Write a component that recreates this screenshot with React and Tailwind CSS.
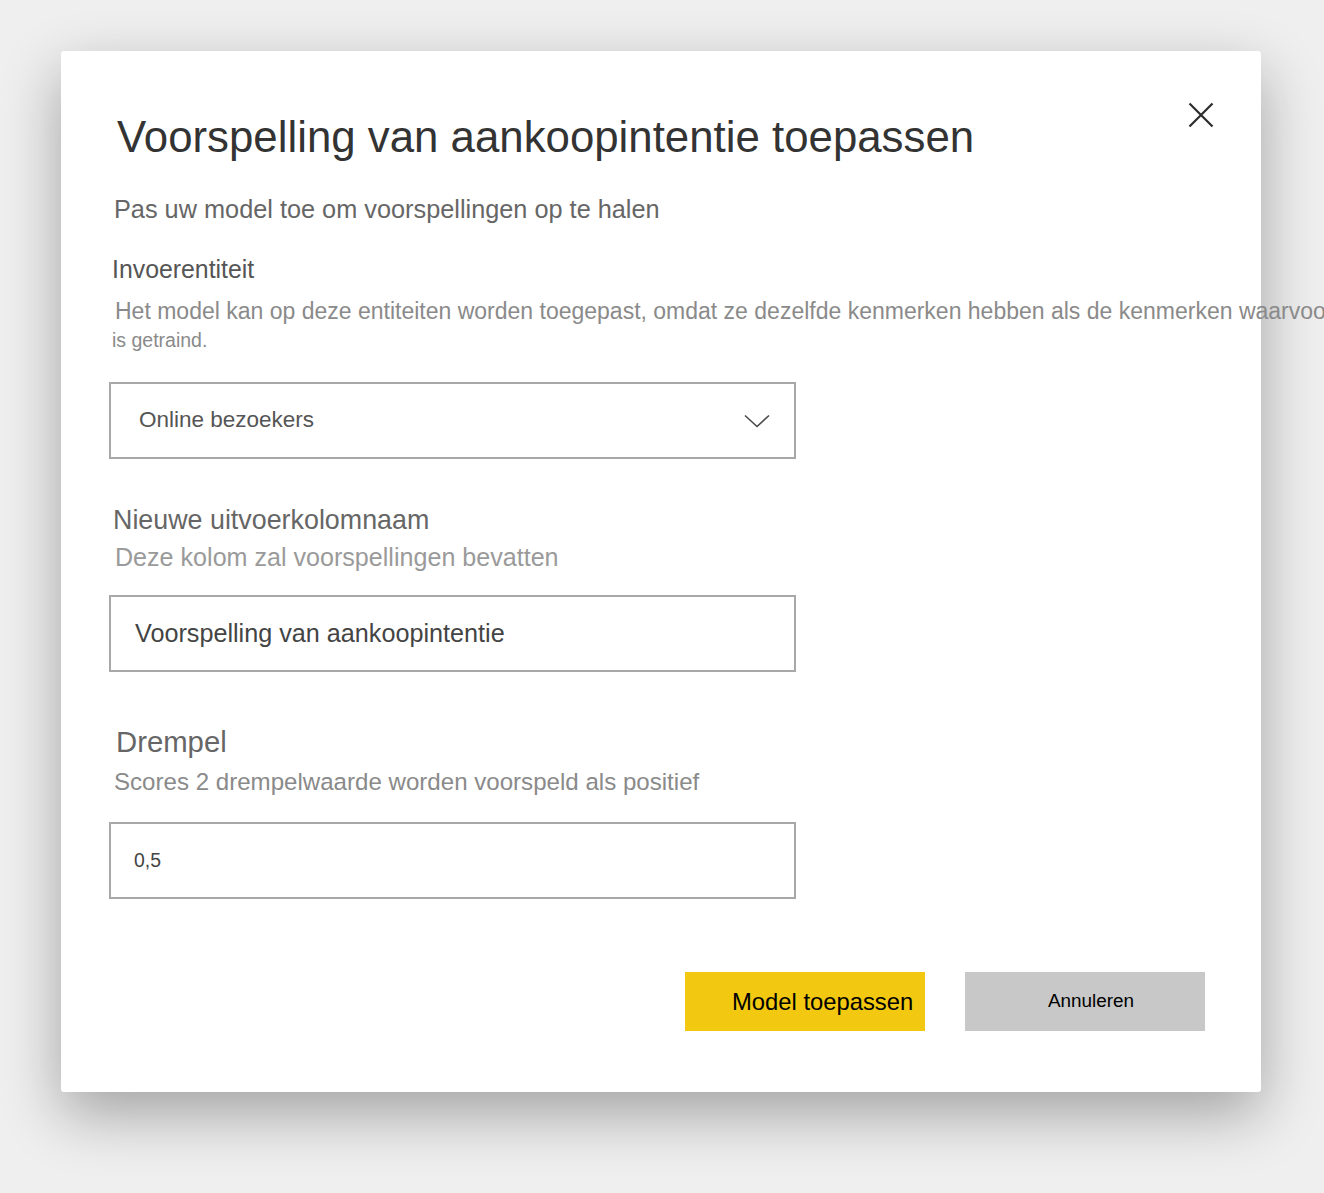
import { useState } from 'react'

const font = { fontFamily: '"Liberation Sans", Arial, sans-serif' }

function Chevron() {
  return (
    <svg width="26" height="14" viewBox="0 0 26 14" fill="none">
      <path d="M1 1.5 L13 12.5 L25 1.5" stroke="#4a4a4a" strokeWidth="1.6" />
    </svg>
  )
}

function CloseIcon() {
  return (
    <svg width="26" height="26" viewBox="0 0 26 26" fill="none">
      <path d="M1.5 1.5 L24.5 24.5 M24.5 1.5 L1.5 24.5" stroke="#2b2b2b" strokeWidth="2.2" />
    </svg>
  )
}

export default function App() {
  const [entity] = useState('Online bezoekers')
  const [column, setColumn] = useState('Voorspelling van aankoopintentie')
  const [threshold, setThreshold] = useState('0,5')

  const boxClass = "ml-[48px] w-[687px] h-[77px] border-2 border-[#a8a8a8] bg-white flex items-center"

  return (
    <div className="w-full h-[1193px] overflow-hidden bg-[#efefef] pt-[51px] pl-[61px]" style={font}>
      <div className="w-[1200px] bg-white rounded-[3px] shadow-[0_22px_60px_rgba(0,0,0,0.32)] pb-[61px]">
        <div className="flex justify-between items-start">
          <h1 className="mt-[64px] ml-[56px] text-[43.8px] leading-[44px] text-[#333333] font-normal">
            Voorspelling van aankoopintentie toepassen
          </h1>
          <button className="mt-[51px] mr-[47px]">
            <CloseIcon />
          </button>
        </div>

        <p className="mt-[38px] ml-[53px] text-[25.3px] leading-[25px] text-[#666666]">
          Pas uw model toe om voorspellingen op te halen
        </p>

        <p className="mt-[36px] ml-[51px] text-[24.85px] leading-[24px] text-[#555555]">Invoerentiteit</p>
        <p className="mt-[18px] ml-[54px] text-[23px] leading-[22px] text-[#8a8a8a] whitespace-nowrap">
          Het model kan op deze entiteiten worden toegepast, omdat ze dezelfde kenmerken hebben als de kenmerken waarvoor
        </p>
        <p className="mt-[8px] ml-[51px] text-[19.5px] leading-[20px] text-[#8a8a8a]">is getraind.</p>

        <div className={`mt-[32px] ${boxClass} justify-between pl-[28px] pr-[24px]`}>
          <span className="text-[22.5px] leading-none text-[#555555]">{entity}</span>
          <Chevron />
        </div>

        <p className="mt-[48px] ml-[52px] text-[26.85px] leading-[27px] text-[#666666]">Nieuwe uitvoerkolomnaam</p>
        <p className="mt-[11px] ml-[54px] text-[25.1px] leading-[25px] text-[#9a9a9a]">Deze kolom zal voorspellingen bevatten</p>

        <div className={`mt-[25px] ${boxClass} pl-[24px]`}>
          <input
            value={column}
            onChange={e => setColumn(e.target.value)}
            className="w-full bg-transparent text-[25.2px] leading-none text-[#444444] outline-none"
          />
        </div>

        <p className="mt-[55px] ml-[55px] text-[29.3px] leading-[29px] text-[#666666]">Drempel</p>
        <p className="mt-[14px] ml-[53px] text-[24.1px] leading-[24px] text-[#8a8a8a]">Scores 2 drempelwaarde worden voorspeld als positief</p>

        <div className={`mt-[28px] ${boxClass} pl-[23px]`}>
          <input
            value={threshold}
            onChange={e => setThreshold(e.target.value)}
            className="w-full bg-transparent text-[19.4px] leading-none text-[#444444] outline-none"
          />
        </div>

        <div className="mt-[73px] flex justify-end gap-[40px] pr-[56px]">
          <button className="w-[240px] h-[59px] bg-[#f2c811] flex items-center pl-[47px] text-[23.8px] leading-none text-black">
            Model toepassen
          </button>
          <button className="w-[240px] h-[59px] bg-[#c8c8c8] flex items-center justify-center pl-[12px] text-[18.9px] leading-none text-black">
            Annuleren
          </button>
        </div>
      </div>
    </div>
  )
}
